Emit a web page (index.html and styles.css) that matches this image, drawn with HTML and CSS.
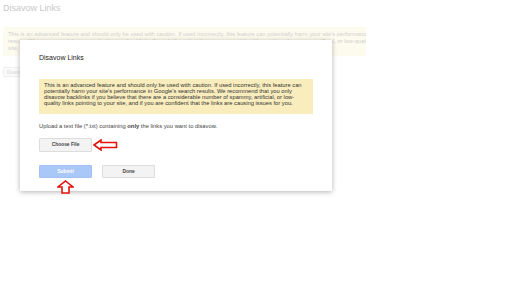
FILE: index.html
```
<!DOCTYPE html>
<html lang="en">
<head>
    <meta charset="UTF-8">
    <title>Disavow Links</title>
    <link rel="stylesheet" href="styles.css">
</head>
<body>

<div class="page">
    <h1 class="page-title">Disavow Links</h1>
    <div class="page-banner">
        <p>This is an advanced feature and should only be used with caution. If used incorrectly, this feature can potentially harm your site's performance in Google's search results. We recommend that you only disavow backlinks if you believe that there are a considerable number of spammy, artificial, or low-quality links pointing to your site, and if you are confident that the links are causing issues for you.</p>
    </div>
    <button class="page-btn">Disavow links</button>
</div>

<div class="modal">
    <h2 class="modal-title">Disavow Links</h2>
    <div class="warning">
        This is an advanced feature and should only be used with caution. If used incorrectly, this feature can potentially harm your site's performance in Google's search results. We recommend that you only disavow backlinks if you believe that there are a considerable number of spammy, artificial, or low-quality links pointing to your site, and if you are confident that the links are causing issues for you.
    </div>
    <p class="upload-text">Upload a text file (*.txt) containing <strong>only</strong> the links you want to disavow.</p>
    <div class="file-row">
        <button class="btn">Choose File</button>
        <svg class="arrow-left" width="25" height="12" viewBox="0 0 25 12">
            <polygon points="1,6 8,1 8,3.5 23.5,3.5 23.5,8.5 8,8.5 8,11" fill="#fff" stroke="#e3120b" stroke-width="1.6"/>
        </svg>
    </div>
    <div class="actions">
        <div class="submit-wrap">
            <button class="btn btn-submit">Submit</button>
            <svg class="arrow-up" width="17" height="14" viewBox="0 0 17 14">
                <polygon points="8.5,1 16,7 12,7 12,13 5,13 5,7 1,7" fill="#fff" stroke="#e3120b" stroke-width="1.6"/>
            </svg>
        </div>
        <button class="btn btn-done">Done</button>
    </div>
</div>

</body>
</html>
```

FILE: styles.css
```
body {
    margin: 0;
    font-family: 'Liberation Sans', Arial, sans-serif;
    background-color: #fff;
    color: #222;
}

.page {
    padding: 3px 0 0 3px;
}

.page-title {
    font-size: 9px;
    font-weight: normal;
    color: #c8c8c8;
    margin: 0 0 13px 0;
    line-height: 11px;
}

.page-banner {
    width: 363px;
    height: 29px;
    background-color: #fdfbee;
    overflow: hidden;
}

.page-banner p {
    width: 419px;
    margin: 0;
    padding: 4px 5px;
    font-size: 5.77px;
    line-height: 6.8px;
    color: #d0d0d0;
}

.page-btn {
    display: block;
    margin-top: 11px;
    width: 30px;
    height: 10px;
    padding: 0 3px;
    font-family: inherit;
    font-size: 4.5px;
    color: #d8d8d8;
    background: #fafafa;
    border: 1px solid #f0f0f0;
    text-align: left;
    overflow: hidden;
    white-space: nowrap;
}

.modal {
    position: absolute;
    left: 20px;
    top: 40px;
    width: 312px;
    height: 151px;
    box-sizing: border-box;
    padding: 14px 19px 0 19px;
    background-color: #fff;
    box-shadow: 0 1px 5px rgba(0, 0, 0, 0.3);
}

.modal-title {
    margin: 0;
    font-size: 7px;
    font-weight: normal;
    line-height: 8px;
    color: #222;
}

.warning {
    margin-top: 17px;
    width: 274px;
    box-sizing: border-box;
    padding: 4px 5px 7.5px 5px;
    background-color: #f9edbe;
    font-size: 5.77px;
    line-height: 5.9px;
    color: #333;
}

.upload-text {
    margin: 9px 0 0 0;
    font-size: 5.8px;
    line-height: 7px;
    color: #444;
}

.file-row {
    margin-top: 8px;
    display: flex;
    align-items: center;
}

.btn {
    width: 53px;
    height: 13.5px;
    padding: 0;
    font-family: inherit;
    font-size: 4.9px;
    font-weight: bold;
    color: #444;
    background-color: #f3f3f3;
    border: 1px solid #dcdcdc;
    border-radius: 1px;
}

.arrow-left {
    margin-left: 1px;
}

.actions {
    margin-top: 13px;
    display: flex;
    align-items: flex-start;
    gap: 10px;
}

.submit-wrap {
    position: relative;
    display: flex;
}

.btn-submit,
.btn-done {
    height: 13px;
}

.btn-submit {
    color: #fff;
    background-color: #a9c7f7;
    border-color: #a3c1f3;
}

.arrow-up {
    position: absolute;
    left: 18px;
    top: 15px;
}
```
